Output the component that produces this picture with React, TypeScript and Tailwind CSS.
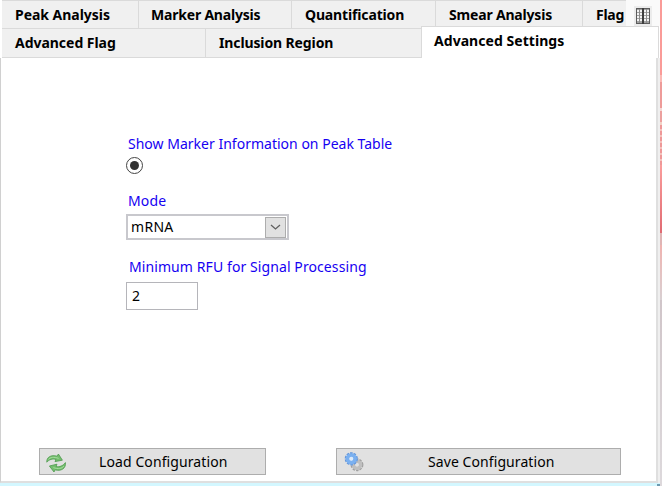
import type { ReactNode } from 'react';

function Tab({ className, children }: { className: string; children?: ReactNode }) {
  return (
    <div role="tab" className={`shrink-0 overflow-hidden whitespace-nowrap border-[#dadada] bg-[#f0f0f0] text-[14px] font-bold leading-[20px] ${className}`}>
      {children}
    </div>
  );
}

function TableIcon() {
  return (
    <svg width="18" height="20" viewBox="0 0 18 20" shapeRendering="crispEdges">
      <path d="M0 0h18v20H0z" fill="#ececec" />
      <path d="M2 2h14v16H2z" fill="#5c5c5c" />
      <path d="M3 3h12v14H3z" fill="#a2a2a2" />
      <path d="M3 4h12v2H3zM3 7h12v2H3zM3 10h12v2H3zM3 13h12v2H3z" fill="#f3f3f3" />
      <path d="M5 3h1v14H5zM12 3h1v14h-1z" fill="#8c8c8c" />
      <path d="M8 2h2v16H8z" fill="#3d3d3d" />
    </svg>
  );
}

function RefreshIcon() {
  return (
    <svg width="20" height="20" viewBox="0 0 20 20" fill="#74be6e" stroke="#4c994c" strokeWidth=".8" strokeLinejoin="round">
      <path d="M.8 9.2C.4 4.2 5 1.4 11.2 3.2L12.4 1 16.4 7.2 9 8.6 10 6.6C6.6 5.4 3.2 6.4 .8 9.2Z" />
      <path d="M19.4 9.6C20.2 15.4 15 18.6 9.2 16.8L8 19 3.4 13 11 11.2 10 13.4C13.6 14.4 17 12.8 19.4 9.6Z" />
      <path d="M2.2 6.6C4 4.2 8 3.6 12.6 5.4M18 13C16 15.6 12 16.4 7.4 14.6" fill="none" stroke="#a5dc9e" strokeWidth="1" />
    </svg>
  );
}

function GearsIcon() {
  return (
    <svg width="20" height="20" viewBox="0 0 20 20" fill="none">
      <circle cx="13" cy="12.8" r="5.4" stroke="#a0a0a0" strokeWidth="2" strokeDasharray="2.4 1" />
      <circle cx="13" cy="12.8" r="3.5" stroke="#bfbfbf" strokeWidth="3.6" />
      <circle cx="13" cy="12.8" r="1.8" fill="#e1e1e1" />
      <circle cx="7.3" cy="6.8" r="5.6" stroke="#6497dc" strokeWidth="2" strokeDasharray="2.5 1" />
      <circle cx="7.3" cy="6.8" r="3.7" stroke="#7ab0f0" strokeWidth="3.8" />
      <circle cx="7.3" cy="6.8" r="2" fill="#dceafa" />
    </svg>
  );
}

export default function App() {
  return (
    <div className="flex h-[486px] w-[662px] overflow-hidden bg-[#efefef] font-['Noto_Sans',sans-serif] text-[14px] leading-[20px] text-black">
      <div className="flex w-[660px] shrink-0 flex-col">
        <div role="tablist" className="flex h-[58px] shrink-0 bg-white pl-[2px]">
          <div className="flex w-[419px] shrink-0 flex-col">
            <div className="flex h-[28px] border-t border-[#dadada]">
              <Tab className="w-[137px] border-r pl-[13px] pt-[4px] tracking-[-0.03px]">Peak Analysis</Tab>
              <Tab className="w-[153px] border-r pl-[12px] pt-[4px] tracking-[-0.2px]">Marker Analysis</Tab>
              <Tab className="w-[129px] pl-[13px] pt-[4px] tracking-[-0.15px]">Quantification</Tab>
            </div>
            <div className="flex h-[30px] border-y border-[#dadada]">
              <Tab className="w-[204px] border-r pl-[13px] pt-[4px] tracking-[-0.03px]">Advanced Flag</Tab>
              <Tab className="w-[215px] pl-[13px] pt-[4px] tracking-[-0.12px]">Inclusion Region</Tab>
            </div>
          </div>
          <div className="flex w-[239px] shrink-0 flex-col">
            <div className="flex h-[26px]">
              <Tab className="w-[15px] border-r border-t" />
              <Tab className="w-[147px] border-r border-t pl-[13px] pt-[4px] tracking-[-0.18px]">Smear Analysis</Tab>
              <Tab className="w-[43px] border-t pl-[13px] pt-[4px] tracking-[-0.26px]">Flag</Tab>
              <button className="flex w-[34px] items-center justify-center bg-[#fafafa] pt-[6px]" aria-label="Tab list">
                <TableIcon />
              </button>
            </div>
            <div role="tab" aria-selected="true" className="h-[32px] w-[238px] border-x border-t border-[#dadada] bg-white pl-[12px] pt-[4px] font-bold tracking-[0.05px]">
              Advanced Settings
            </div>
          </div>
        </div>
        <div className="flex h-[425px] shrink-0">
          <main className="flex w-[658px] flex-col border-b-2 border-l border-r-2 border-b-[#dfdfdf] border-l-[#d0d0d0] border-r-[#dfdfdf] bg-white">
            <section className="flex flex-col items-start pl-[125px] pt-[76px]">
              <div className="pl-[2px] tracking-[0.01px] text-[#1600f2]">Show Marker Information on Peak Table</div>
              <div role="radio" aria-checked="true" className="mt-[3px] flex size-[17px] items-center justify-center rounded-full border border-[#444]">
                <div className="size-[9px] rounded-full bg-[#333]" />
              </div>
              <div className="mt-[17px] pl-[2px] tracking-[0.15px] text-[#1600f2]">Mode</div>
              <div role="combobox" className="mt-[3px] flex h-[26px] w-[163px] items-center justify-between border-2 border-[#c8c8cd] pl-[3px] pr-px">
                <span className="tracking-[0.3px]">mRNA</span>
                <span className="flex h-[21px] w-[21px] items-center justify-center border border-[#adadad] bg-[#e1e1e1]">
                  <svg width="11" height="6" viewBox="0 0 11 6" fill="none" stroke="#606060" strokeWidth="1.3"><path d="m1 1 4.5 4L10 1" /></svg>
                </span>
              </div>
              <div className="mt-[17px] pl-[3px] tracking-[0.09px] text-[#1600f2]">Minimum RFU for Signal Processing</div>
              <div role="textbox" className="mt-[5px] flex h-[28px] w-[72px] items-center border border-[#b5b5ba] pl-[5px]">2</div>
            </section>
            <footer className="mb-[6px] mt-auto flex pl-[38px]">
              <button className="flex h-[27px] w-[227px] items-center border border-[#adadad] bg-[#e1e1e1] pl-[6px]">
                <span className="pt-[3px]"><RefreshIcon /></span>
                <span className="ml-[33px] tracking-[0.1px]">Load Configuration</span>
              </button>
              <button className="ml-[70px] flex h-[27px] w-[285px] items-center border border-[#adadad] bg-[#e1e1e1] pl-[7px]">
                <GearsIcon />
                <span className="ml-[64px] tracking-[0.08px]">Save Configuration</span>
              </button>
            </footer>
          </main>
          <div className="w-[2px] bg-[#efefef]" />
        </div>
        <div className="flex h-[3px] justify-end bg-[#d3f7ff]">
          <div className="mt-px h-[2px] w-[3px] bg-[#6d9ab0]" />
        </div>
      </div>
      <div className="flex w-[2px] shrink-0 flex-col">
        <div className="h-[75px] bg-[#fa9b98]" />
        <div className="h-[7px] bg-[#fbb9b4]" />
        <div className="h-[26px] bg-[#ee9b99]" />
        <div className="h-[3px] bg-[#f6d8d4]" />
        <div className="h-[11px] bg-[#eca09e]" />
        <div className="h-[3px] bg-[#f3d1c5]" />
        <div className="h-[40px] bg-[repeating-linear-gradient(#ee9898_0px,#ee9898_4px,#f5c2bc_4px,#f5c2bc_6px)]" />
        <div className="h-[68px] bg-linear-to-b from-[#fa9d9c] to-[#e06a72]" />
        <div className="h-[12px] bg-[#dfb5b5]" />
        <div className="h-[55px] bg-linear-to-b from-[#efb3b0] to-[#d8cfd2]" />
        <div className="grow bg-linear-to-b from-[#d0c5c9] to-[#ddd9dc]" />
      </div>
    </div>
  );
}
